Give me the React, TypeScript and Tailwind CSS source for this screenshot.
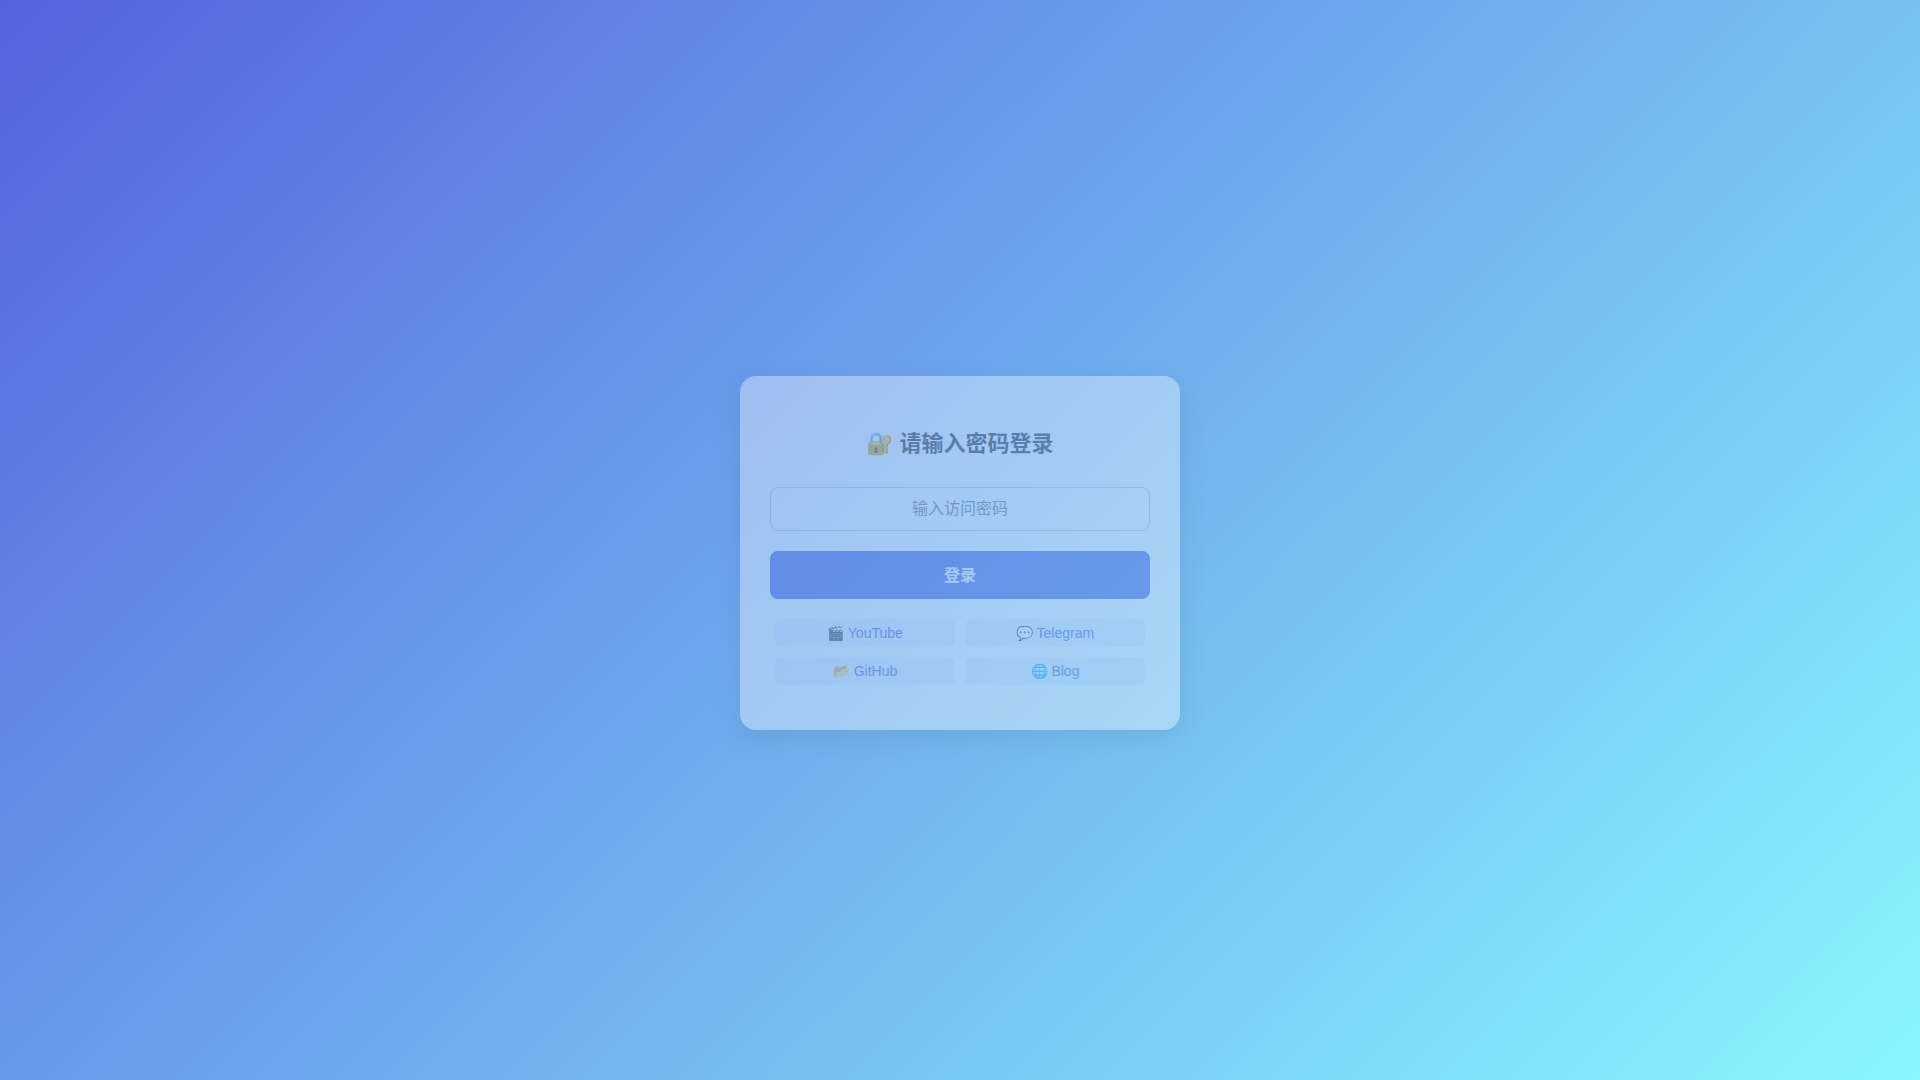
const links = [
  { icon: '🎬', label: 'YouTube' },
  { icon: '💬', label: 'Telegram' },
  { icon: '📂', label: 'GitHub' },
  { icon: '🌐', label: 'Blog' },
];

export default function App() {
  return (
    <main className="flex min-h-screen items-center justify-center bg-[linear-gradient(135deg,#5563de,#89f7fe)] pt-[26px] font-['Liberation_Sans','Noto_Sans_CJK_SC',sans-serif]">
      <form
        className="w-full max-w-[440px] rounded-2xl bg-white px-[30px] pt-[51px] pb-[45px] text-center opacity-[0.36] shadow-[0_8px_25px_rgba(0,0,0,0.2)]"
        onSubmit={(e) => e.preventDefault()}
      >
        <h1 className="mb-[27px] text-[22px] leading-[33px] font-bold text-[#333333]">🔐 请输入密码登录</h1>
        <input
          type="password"
          aria-label="输入访问密码"
          placeholder="输入访问密码"
          className="mb-5 block h-11 w-full rounded-lg border border-[#cccccc] px-3 text-center text-base text-[#333333] placeholder:text-[#757575] placeholder:opacity-100"
        />
        <button
          type="submit"
          className="mb-5 block h-12 w-full rounded-lg bg-[#5563de] pt-0.5 text-base font-bold text-white"
        >
          登录
        </button>
        <nav className="grid grid-cols-2 gap-2.5 px-[5px]">
          {links.map((link) => (
            <a
              key={link.label}
              href="#"
              className="rounded-md bg-[#5563de]/8 text-sm leading-7 text-[#5563de]"
            >
              {link.icon} {link.label}
            </a>
          ))}
        </nav>
      </form>
    </main>
  );
}
